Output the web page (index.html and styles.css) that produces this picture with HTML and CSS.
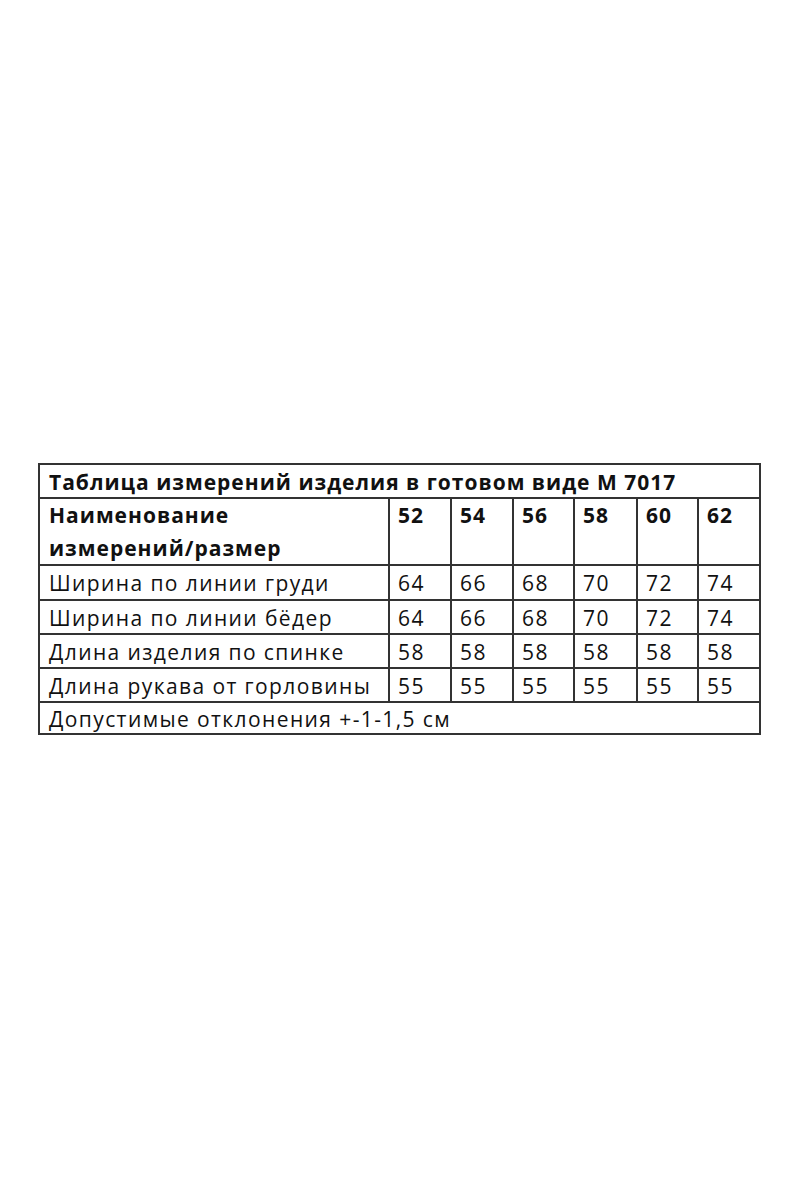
FILE: index.html
```html
<!DOCTYPE html>
<html lang="ru">
<head>
<meta charset="utf-8">
<title>Таблица измерений</title>
<link rel="stylesheet" href="styles.css">
</head>
<body>
<div class="page">
  <div class="sizes">
    <div class="cell title b">Таблица измерений изделия в готовом виде М 7017</div>

    <div class="cell name head b">Наименование<br>измерений/размер</div>
    <div class="cell num head b">52</div><div class="cell num head b">54</div><div class="cell num head b">56</div>
    <div class="cell num head b">58</div><div class="cell num head b">60</div><div class="cell num head b">62</div>

    <div class="cell name r1">Ширина по линии груди</div>
    <div class="cell num r1">64</div><div class="cell num r1">66</div><div class="cell num r1">68</div>
    <div class="cell num r1">70</div><div class="cell num r1">72</div><div class="cell num r1">74</div>

    <div class="cell name r2">Ширина по линии бёдер</div>
    <div class="cell num r2">64</div><div class="cell num r2">66</div><div class="cell num r2">68</div>
    <div class="cell num r2">70</div><div class="cell num r2">72</div><div class="cell num r2">74</div>

    <div class="cell name r2">Длина изделия по спинке</div>
    <div class="cell num r2">58</div><div class="cell num r2">58</div><div class="cell num r2">58</div>
    <div class="cell num r2">58</div><div class="cell num r2">58</div><div class="cell num r2">58</div>

    <div class="cell name r2">Длина рукава от горловины</div>
    <div class="cell num r2">55</div><div class="cell num r2">55</div><div class="cell num r2">55</div>
    <div class="cell num r2">55</div><div class="cell num r2">55</div><div class="cell num r2">55</div>

    <div class="cell foot">Допустимые отклонения +-1-1,5 см</div>
  </div>
</div>
</body>
</html>
```

FILE: styles.css
```css
html, body {
  margin: 0;
  padding: 0;
  background: #ffffff;
}
.page {
  padding: 463px 0 0 38px;
}
.sizes {
  display: inline-grid;
  grid-template-columns: 350px 62px 62px 61px 63px 61px 62px;
  border-top: 2px solid #333;
  border-left: 2px solid #333;
  font-family: "Open Sans", "Liberation Sans", sans-serif;
  font-size: 21px;
  color: #111;
  letter-spacing: 1.4px;
}
.cell {
  box-sizing: border-box;
  border-right: 2px solid #333;
  border-bottom: 2px solid #333;
  padding: 4px 0 0 9px;
  line-height: 27px;
  white-space: nowrap;
}
.cell.num { padding-left: 8px; }
.b {
  font-weight: 700;
  letter-spacing: 1px;
}
.title {
  grid-column: 1 / -1;
  height: 34px;
}
.head {
  height: 67px;
  padding-top: 0;
  line-height: 32.5px;
}
.r1 { height: 35px; }
.r2 { height: 34px; }
.foot {
  grid-column: 1 / -1;
  height: 32px;
  padding-top: 3px;
}
```
